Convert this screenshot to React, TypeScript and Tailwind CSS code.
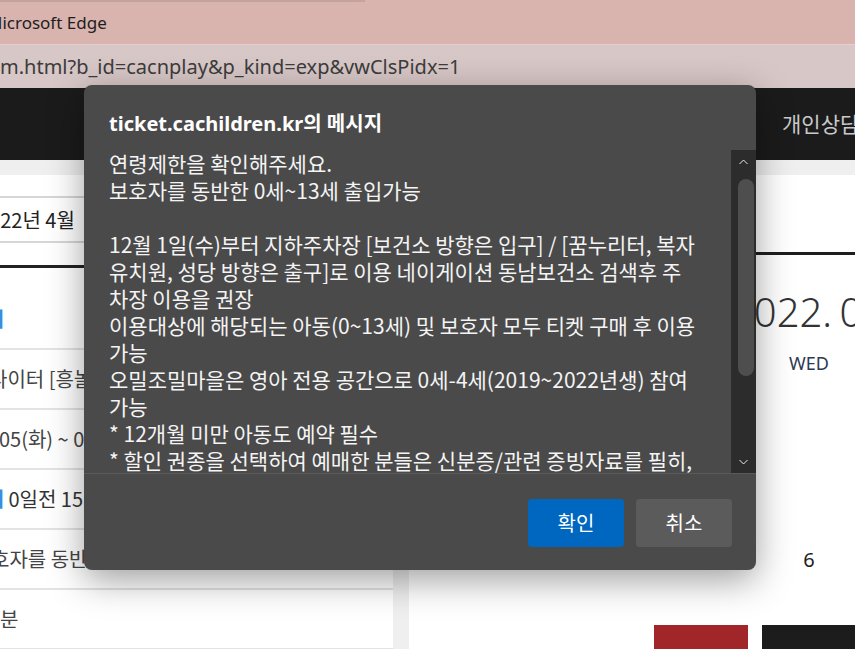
import React from "react";

const KR = "font-['Noto_Sans_CJK_KR',sans-serif]";

const MESSAGE_LINES = [
  "연령제한을 확인해주세요.",
  "보호자를 동반한 0세~13세 출입가능",
  "",
  "12월 1일(수)부터 지하주차장 [보건소 방향은 입구] / [꿈누리터, 복자",
  "유치원, 성당 방향은 출구]로 이용 네이게이션 동남보건소 검색후 주",
  "차장 이용을 권장",
  "이용대상에 해당되는 아동(0~13세) 및 보호자 모두 티켓 구매 후 이용",
  "가능",
  "오밀조밀마을은 영아 전용 공간으로 0세-4세(2019~2022년생) 참여",
  "가능",
  "* 12개월 미만 아동도 예약 필수",
  "* 할인 권종을 선택하여 예매한 분들은 신분증/관련 증빙자료를 필히,",
  "지참해주시기 바랍니다.",
];

const DAYS = ["SUN", "MON", "TUE", "WED", "THU", "FRI", "SAT"];

function Chevron({ up }: { up?: boolean }) {
  return (
    <svg width="9" height="6" viewBox="0 0 9 6" aria-hidden="true">
      <polyline
        points={up ? "0.5,5 4.5,1 8.5,5" : "0.5,1 4.5,5 8.5,1"}
        fill="none"
        stroke="#e8e8e8"
        strokeWidth="1"
      />
    </svg>
  );
}

/* 왼쪽 상품 정보 행 */
function InfoRow({ children }: { children: React.ReactNode }) {
  return (
    <div className="h-[60px] flex items-center border-b-2 border-[#e3e3e3] whitespace-nowrap text-[20px] text-[#444]">
      {children}
    </div>
  );
}

export default function App() {
  return (
    <div className={`relative w-[855px] h-[649px] overflow-hidden bg-[#efefef] ${KR}`}>
      {/* 브라우저 타이틀바 */}
      <div className="h-[44px] bg-[#d9b3ad] flex items-center">
        <div className="absolute left-0 top-0 h-[2px] w-[365px] bg-[#c4a29d]" />
        <span className="-ml-[13px] mt-[2px] text-[17px] text-[#1e1e1e] font-['Noto_Sans',sans-serif] whitespace-nowrap">
          Microsoft Edge
        </span>
      </div>
      <div className="h-px bg-[#e4cfcc]" />
      {/* 주소창 */}
      <div className="h-[43px] bg-[#d7c7c6] flex items-center">
        <span className="text-[20px] text-[#3c3c3c] font-['Noto_Sans',sans-serif] whitespace-nowrap">
          m.html?b_id=cacnplay&amp;p_kind=exp&amp;vwClsPidx=1
        </span>
      </div>

      {/* 사이트 헤더 */}
      <div className="h-[72px] bg-[#1b1b1b] flex items-center overflow-hidden">
        <span className="ml-[782px] text-[21px] text-[#c9c9c9] whitespace-nowrap">개인상담 예약</span>
      </div>

      <div className="pt-[15px] flex gap-[16px] h-[489px]">
        {/* 왼쪽 패널 */}
        <div className="w-[393px] shrink-0 bg-white overflow-hidden">
          <div className="h-[23px] border-b-2 border-[#d6d6d6]" />
          <div className="h-[45px] flex items-center border-b-2 border-[#d6d6d6]">
            <span className="-ml-[22px] text-[20px] text-[#222] whitespace-nowrap">2022년 4월</span>
          </div>
          <div className="h-[22px]" />
          <div className="h-[3px] bg-[#222]" />
          <div className="h-[22px]" />
          <InfoRow>
            <span className="-ml-[14px] text-[#3a8ee0] font-bold">기</span>
          </InfoRow>
          <InfoRow>
            <span className="-ml-[11px]">나이터 [흥놀이터]</span>
          </InfoRow>
          <InfoRow>
            <span className="-ml-[1px]">05(화) ~ 04.30(토)</span>
          </InfoRow>
          <InfoRow>
            <span className="-ml-[14px] text-[#3a8ee0] font-bold">기</span>
            <span className="ml-[4px] text-[#333]">0일전 15시까지</span>
          </InfoRow>
          <InfoRow>
            <span className="-ml-[9px]">호자를 동반한 0세~13세 출입가능</span>
          </InfoRow>
          <InfoRow>
            <span>분</span>
          </InfoRow>
        </div>

        {/* 오른쪽 패널 */}
        <div className="flex-1 bg-white overflow-hidden">
          <div className="h-[77px]" />
          <div className="h-[3px] bg-[#1e1e1e]" />
          <div className="pl-[322px] pt-[29px] whitespace-nowrap text-[40px] font-light leading-[56px] text-[#333] font-['Noto_Sans',sans-serif] [word-spacing:-3px]">
            2022. 04. 06
          </div>
          <div className="ml-[64px] mt-[11px] grid grid-cols-[repeat(7,96px)] font-['Noto_Sans',sans-serif]">
            {DAYS.map((d) => (
              <div key={d} className="text-center text-[18px] leading-[24px] text-[#2e3a52]">
                {d}
              </div>
            ))}
          </div>
          <div className="ml-[64px] mt-[171px] grid grid-cols-[repeat(7,96px)] font-['Noto_Sans',sans-serif]">
            {[3, 4, 5, 6, 7, 8, 9].map((n) => (
              <div key={n} className="text-center text-[20px] leading-[28px] text-[#222]">
                {n}
              </div>
            ))}
          </div>
          <div className="mt-[51px] ml-[245px] flex gap-[14px]">
            <div className="w-[94px] h-[40px] bg-[#a0262a]" />
            <div className="w-[94px] h-[40px] bg-[#1c1c1c]" />
          </div>
        </div>
      </div>

      {/* 알림 대화상자 */}
      <div className="absolute left-[84px] top-[85px] w-[672px] h-[485px] rounded-[8px] bg-[#4a4a4a] shadow-[0_10px_36px_rgba(0,0,0,0.38)] flex flex-col overflow-hidden">
        <div className="pt-[25px] pl-[25px] h-[65px] text-[20px] leading-[28px] font-bold text-white font-['Noto_Sans','Noto_Sans_CJK_KR',sans-serif] whitespace-nowrap">
          ticket.cachildren.kr의 메시지
        </div>
        <div className="flex h-[323px]">
          <div className="flex-1 pl-[25px] overflow-hidden text-[21px] leading-[27px] text-[#f4f4f4]">
            {MESSAGE_LINES.map((line, i) => (
              <div key={i} className="h-[27px] whitespace-nowrap">
                {line}
              </div>
            ))}
          </div>
          <div className="w-[25px] bg-[#2c2c2c] flex flex-col items-center pt-[9px] pb-[8px]">
            <Chevron up />
            <div className="mt-[14px] w-[16px] h-[197px] rounded-full bg-[#4e4e4e] ml-[5px]" />
            <div className="flex-1" />
            <Chevron />
          </div>
        </div>
        <div className="h-px bg-[#5a5a5a]" />
        <div className="flex-1 flex justify-end items-start pt-[25px] pr-[24px] gap-[12px]">
          <button className="w-[96px] h-[48px] rounded-[4px] bg-[#0067c0] text-white text-[20px]">
            확인
          </button>
          <button className="w-[96px] h-[48px] rounded-[4px] bg-[#5b5b5b] text-white text-[20px]">
            취소
          </button>
        </div>
      </div>
    </div>
  );
}
